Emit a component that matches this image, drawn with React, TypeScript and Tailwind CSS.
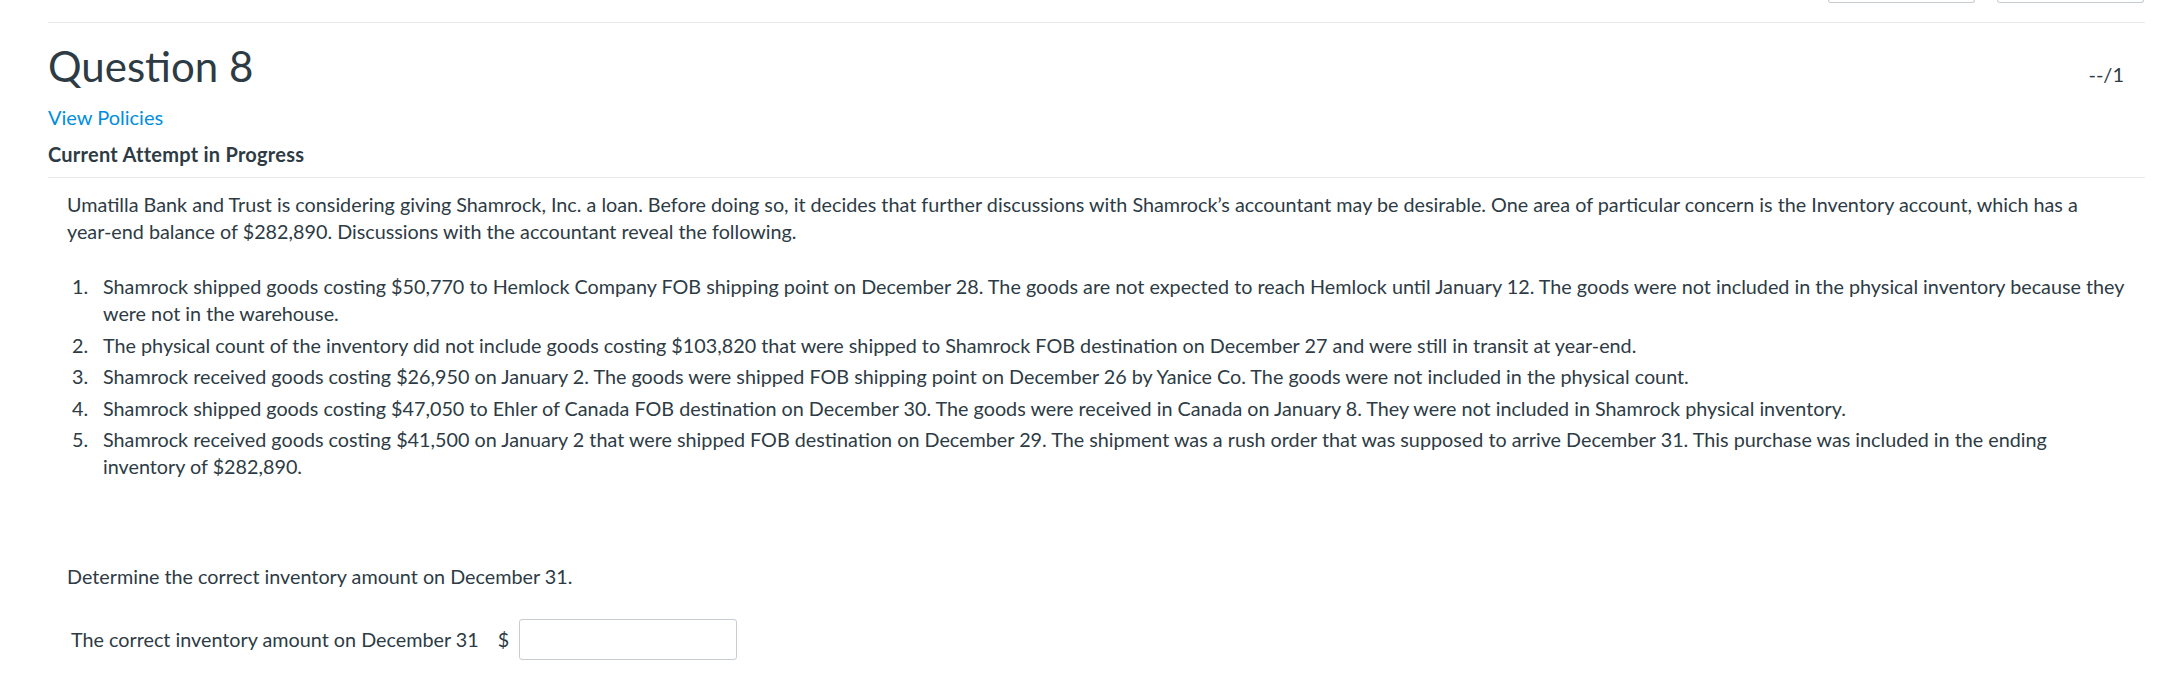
import React from "react";

const items: string[] = [
  "Shamrock shipped goods costing $50,770 to Hemlock Company FOB shipping point on December 28. The goods are not expected to reach Hemlock until January 12. The goods were not included in the physical inventory because they were not in the warehouse.",
  "The physical count of the inventory did not include goods costing $103,820 that were shipped to Shamrock FOB destination on December 27 and were still in transit at year-end.",
  "Shamrock received goods costing $26,950 on January 2. The goods were shipped FOB shipping point on December 26 by Yanice Co. The goods were not included in the physical count.",
  "Shamrock shipped goods costing $47,050 to Ehler of Canada FOB destination on December 30. The goods were received in Canada on January 8. They were not included in Shamrock physical inventory.",
  "Shamrock received goods costing $41,500 on January 2 that were shipped FOB destination on December 29. The shipment was a rush order that was supposed to arrive December 31. This purchase was included in the ending inventory of $282,890.",
];

export default function App() {
  return (
    <div className="w-full h-[696px] overflow-hidden bg-white font-['Lato','Noto_Sans',sans-serif] text-[#2d3b45]">
      <div className="ml-[48px] w-[2097px]">
        <div className="flex justify-end gap-[22px] pr-[1px]">
          <div className="w-[147px] h-[3px] border border-t-0 border-[#c7cdd1] rounded-b-[5px]" />
          <div className="w-[147px] h-[3px] border border-t-0 border-[#c7cdd1] rounded-b-[5px]" />
        </div>
        <div className="mt-[19px] border-t border-[#e8eaec]" />
        <div className="mt-[18px] flex items-baseline justify-between">
          <h2 className="text-[42px] leading-[1.2] font-normal">Question 8</h2>
          <div className="pr-[21px] text-[20px] leading-[27px]">--/1</div>
        </div>
        <div className="mt-[13px] text-[20px] leading-[27px] text-[#008ee2]">View Policies</div>
        <div className="mt-[10px] text-[20px] leading-[27px] font-bold tracking-[0.25px]">Current Attempt in Progress</div>
        <div className="mt-[9px] border-t border-[#e8eaec]" />
        <div className="px-[19px] text-[19.77px] leading-[27px]">
          <p className="mt-[13px]">
            Umatilla Bank and Trust is considering giving Shamrock, Inc. a loan. Before doing so, it decides that further discussions with Shamrock’s accountant may be desirable. One area of particular concern is the Inventory account, which has a year-end balance of $282,890. Discussions with the accountant reveal the following.
          </p>
          <ol className="mt-[28px]">
            {items.map((t, i) => (
              <li key={i} className="flex mb-[4.5px]">
                <span className="w-[36px] shrink-0 pl-[5px]">{i + 1}.</span>
                <span>{t}</span>
              </li>
            ))}
          </ol>
          <p className="mt-[83px]">Determine the correct inventory amount on December 31.</p>
          <div className="mt-[29px] flex items-center pl-[4px]">
            <span>The correct inventory amount on December 31</span>
            <span className="ml-[19px]">$</span>
            <input
              type="text"
              aria-label="The correct inventory amount on December 31"
              className="ml-[10px] w-[218px] h-[41px] border border-[#c7cdd1] rounded-[3px] bg-white px-2 outline-none"
            />
          </div>
        </div>
      </div>
    </div>
  );
}
